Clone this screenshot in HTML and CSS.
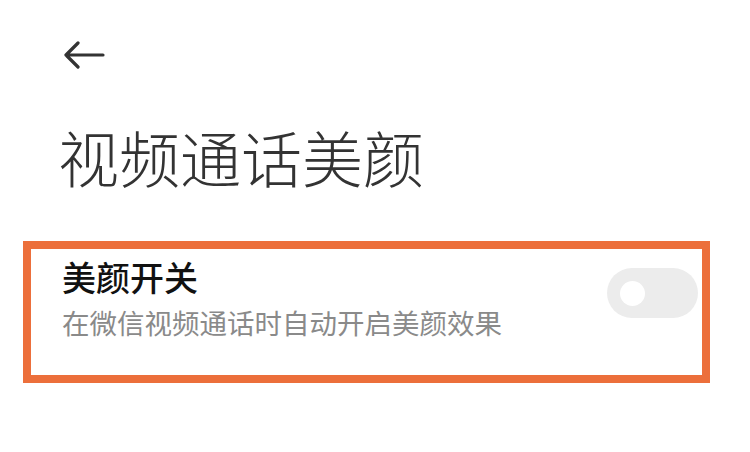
FILE: index.html
```html
<!DOCTYPE html>
<html lang="zh-CN">
<head>
<meta charset="utf-8">
<link rel="stylesheet" href="styles.css">
</head>
<body>
<div class="page">
  <div class="topbar">
    <svg class="back" width="42" height="28" viewBox="0 0 42 28">
      <path d="M40 14H3M15 2L3 14L15 26" fill="none" stroke="#333" stroke-width="3.2" stroke-linecap="round" stroke-linejoin="round"/>
    </svg>
  </div>
  <h1 class="title">视频通话美颜</h1>
  <div class="card">
    <div class="texts">
      <div class="label">美颜开关</div>
      <div class="desc">在微信视频通话时自动开启美颜效果</div>
    </div>
    <div class="toggle"><div class="knob"></div></div>
  </div>
</div>
</body>
</html>
```
FILE: styles.css
```css
html, body {
  margin: 0;
  padding: 0;
  background: #ffffff;
}
body {
  width: 750px;
  height: 452px;
  overflow: hidden;
  font-family: "Noto Sans CJK SC", "Noto Sans", sans-serif;
}
.page {
  display: flex;
  flex-direction: column;
}
.topbar {
  height: 40px;
  padding: 41px 0 0 63px;
}
.back {
  display: block;
}
.title {
  margin: 40px 0 0 58px;
  font-size: 61px;
  font-weight: 300;
  line-height: 72px;
  color: #333;
  letter-spacing: 0;
}
.card {
  margin: 48px 0 0 23px;
  width: 671px;
  height: 126px;
  border: 8px solid #ec6f3b;
  display: flex;
  align-items: center;
  justify-content: space-between;
}
.texts {
  padding-left: 31px;
  display: flex;
  flex-direction: column;
  margin-top: -30px;
}
.label {
  font-size: 34px;
  font-weight: 500;
  color: #111;
  line-height: 44px;
}
.desc {
  font-size: 27.5px;
  color: #8a8a8a;
  line-height: 34px;
  margin-top: 6px;
}
.toggle {
  width: 91px;
  height: 50px;
  border-radius: 25px;
  background: #ececec;
  margin-right: 4px;
  margin-top: -38px;
  display: flex;
  align-items: center;
  padding-left: 13px;
  box-sizing: border-box;
}
.knob {
  width: 25px;
  height: 25px;
  border-radius: 50%;
  background: #fff;
}
```
